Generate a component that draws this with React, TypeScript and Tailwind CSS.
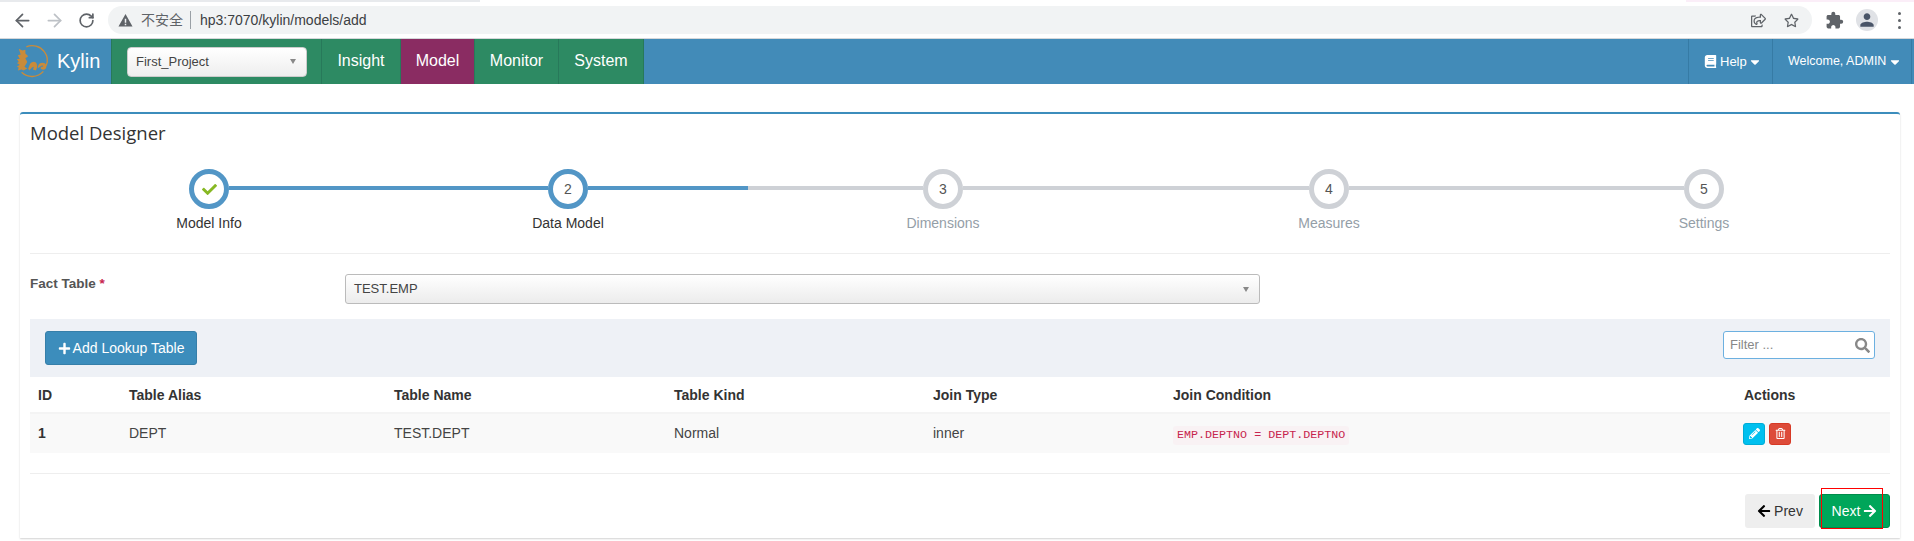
import { FaArrowLeft, FaArrowRight, FaBook, FaCaretDown, FaCheck, FaPencilAlt, FaPlus, FaRegShareSquare, FaRegStar, FaRegTrashAlt, FaSearch } from 'react-icons/fa';
import { MdExtension, MdPerson } from 'react-icons/md';
import { ArrowLeft, ArrowRight, RotateCw } from 'lucide-react';

const menus = [
  { label: 'Insight', width: 'w-[79px]', bg: 'bg-[#2d8a63]' },
  { label: 'Model', width: 'w-[74px]', bg: 'bg-[#8a2c62]' },
  { label: 'Monitor', width: 'w-[84px]', bg: 'bg-[#2d8a63]' },
  { label: 'System', width: 'w-[85px]', bg: 'bg-[#2d8a63]' },
];

const columns = ['ID', 'Table Alias', 'Table Name', 'Table Kind', 'Join Type', 'Join Condition', 'Actions'];

function Logo() {
  return (
    <svg viewBox="0 0 40 36" className="w-[38px] h-[34px]" fill="#c98b3a">
      <path d="M14 3a16 16 0 0 1 19 5 15 15 0 0 1 2 15" fill="none" stroke="#c98b3a" strokeWidth="1.4" />
      <path d="M9 30a16 16 0 0 0 23-1" fill="none" stroke="#c98b3a" strokeWidth="1.4" />
      <path d="M6 5l4 2 3-1 0 4 3 3-3 2 2 4-3 5 3 2-4 2-2-1-4 1 1-3-2-1 3-2-3-2 2-1-2-3 3 0-2-4 3-1z" />
      <path d="M18 21c2-3 6-3 7 0s0 6-1 7l-3-1 1-3-2 1-3 3-1-2z" />
      <path d="M27 22c1-3 7-3 8 0s-1 6-4 5-2-3 0-3 1-2-1-1-3 3-4 2z" />
    </svg>
  );
}

function Step({ n, label, done, active }: { n: number; label: string; done?: boolean; active?: boolean }) {
  return (
    <div className="w-10 flex flex-col items-center shrink-0">
      <div className={`w-10 h-10 rounded-full bg-white border-[5px] flex items-center justify-center text-[14px] text-[#555] ${active ? 'border-[#5296c6]' : 'border-[#ced1d6]'}`}>
        {done ? <FaCheck className="text-[#87b823] text-[15px]" /> : n}
      </div>
      <div className={`mt-[5px] text-[14px] leading-[18px] whitespace-nowrap ${active ? 'text-[#333]' : 'text-[#949ea7]'}`}>{label}</div>
    </div>
  );
}

function Bar({ width, active }: { width: string; active?: boolean }) {
  return <div className={`h-1 mt-[17px] shrink-0 ${width} ${active ? 'bg-[#5296c6]' : 'bg-[#ced1d6]'}`} />;
}

export default function App() {
  return (
    <div className="w-[1914px] h-[541px] overflow-hidden bg-white text-[#333] font-['Liberation_Sans','Noto_Sans_CJK_SC',sans-serif]">
      {/* browser chrome */}
      <div className="h-[2px] flex">
        <div className="w-[480px] bg-[#e8eaed]" />
        <div className="w-[1206px] bg-white" />
        <div className="flex-1 bg-[#fbeef8]" />
      </div>
      <div className="h-[37px] flex items-center border-b border-[#d5d7da]">
        <div className="w-[108px] flex items-center pl-[12px] gap-[11px] text-[#5f6368] shrink-0">
          <ArrowLeft size={21} strokeWidth={2} />
          <ArrowRight size={21} strokeWidth={2} className="text-[#bdc1c6]" />
          <RotateCw size={17} strokeWidth={2.4} className="ml-[2px]" />
        </div>
        <div className="w-[1704px] h-[28px] rounded-full bg-[#f1f3f4] flex items-center pl-[10px] pr-[13px] text-[14px] shrink-0">
          <svg viewBox="0 0 16 16" className="w-[15px] h-[15px] text-[#5f6368]" fill="currentColor">
            <path d="M8 1l7.5 13.5h-15zM7.2 6v4.5h1.6V6zm0 5.5v1.6h1.6v-1.6z" fillRule="evenodd" />
          </svg>
          <span className="ml-[8px] text-[14px] text-[#5f6368]">不安全</span>
          <span className="ml-[7px] mr-[9px] w-px h-[18px] bg-[#9aa0a6]" />
          <span className="text-[#3c4043]">hp3:7070/kylin/models/add</span>
          <div className="ml-auto flex items-center gap-[18px] text-[#5f6368]">
            <FaRegShareSquare className="text-[15px]" />
            <FaRegStar className="text-[15px]" />
          </div>
        </div>
        <MdExtension className="ml-[13px] text-[19px] text-[#5f6368] shrink-0" />
        <div className="ml-[12px] w-[22px] h-[22px] rounded-full bg-[#e0e2e6] flex items-center justify-center shrink-0">
          <MdPerson className="text-[20px] text-[#4a5568]" />
        </div>
        <div className="ml-[20px] flex flex-col gap-[4px] shrink-0">
          <span className="w-[3px] h-[3px] rounded-full bg-[#5f6368]" />
          <span className="w-[3px] h-[3px] rounded-full bg-[#5f6368]" />
          <span className="w-[3px] h-[3px] rounded-full bg-[#5f6368]" />
        </div>
      </div>

      {/* navbar */}
      <div className="h-[45px] bg-[#428bb8] flex text-white">
        <div className="w-[111px] flex items-center pl-[13px] gap-[6px] pb-[2px] shrink-0">
          <Logo />
          <span className="text-[20px]">Kylin</span>
        </div>
        <div className="w-[211px] bg-[#2d8a63] border-x border-[#27795a] flex items-center pl-[15px] shrink-0">
          <div className="w-[180px] h-[30px] rounded-[4px] border border-[#ccc] bg-gradient-to-b from-white to-[#eeeeee] flex items-center justify-between pl-[8px] pr-[9px] text-[13px] text-[#444]">
            First_Project
            <span className="w-0 h-0 border-x-[3px] border-x-transparent border-t-[5px] border-t-[#888] mr-[1px]" />
          </div>
        </div>
        {menus.map((m) => (
          <div key={m.label} className={`${m.width} ${m.bg} border-r border-[#27795a] flex items-center justify-center pb-[2px] text-[16px] shrink-0`}>
            {m.label}
          </div>
        ))}
        <div className="ml-auto flex text-[13px]">
          <div className="w-[84px] border-l border-[#367ba5] flex items-center pl-[15px] gap-[3px]">
            <FaBook className="text-[13px]" /> Help <FaCaretDown className="text-[14px] -ml-[2px]" />
          </div>
          <div className="w-[140px] mr-[2px] border-x border-[#367ba5] flex items-center pl-[15px] gap-[2px] text-[12.5px]">
            Welcome, ADMIN <FaCaretDown className="text-[14px]" />
          </div>
        </div>
      </div>

      {/* model designer panel */}
      <div className="mt-[28px] ml-5 w-[1880px] h-[426px] border-t-2 border-[#3c8dbc] rounded-t-[3px] px-[10px] shadow-[0_1px_2px_rgba(0,0,0,0.18)]">
        <h1 className="pt-[7px] text-[18.5px] leading-[24px] font-['Open_Sans',sans-serif] text-[#333]">Model Designer</h1>

        <div className="h-[85px] mt-[24px] flex pl-[159px] border-b border-[#eeeeee]">
          <Step n={1} label="Model Info" done active />
          <Bar width="w-[319px]" active />
          <Step n={2} label="Data Model" active />
          <Bar width="w-[160px]" active />
          <Bar width="w-[175px]" />
          <Step n={3} label="Dimensions" />
          <Bar width="w-[346px]" />
          <Step n={4} label="Measures" />
          <Bar width="w-[335px]" />
          <Step n={5} label="Settings" />
        </div>

        <div className="h-[65px] flex items-start">
          <label className="w-[315px] pt-[21px] text-[13.5px] font-bold text-[#555] leading-[18px]">
            Fact Table <span className="text-[#c7254e]">*</span>
          </label>
          <div className="mt-[20px] w-[915px] h-[30px] rounded-[3px] border border-[#bbb] bg-gradient-to-b from-white to-[#ececec] flex items-center justify-between pl-[8px] pr-[10px] text-[13px] text-[#444]">
            TEST.EMP
            <span className="w-0 h-0 border-x-[3px] border-x-transparent border-t-[5px] border-t-[#888]" />
          </div>
        </div>

        <div className="h-[58px] bg-[#eef1f6] flex justify-between pl-[15px] pr-[15px] pt-[12px]">
          <button className="w-[152px] h-[34px] rounded-[3px] bg-[#3c8dbc] border border-[#367fa9] text-white text-[14px] flex items-center justify-center gap-[2px]">
            <FaPlus className="text-[13px]" /> Add Lookup Table
          </button>
          <div className="w-[152px] h-[28px] rounded-[3px] border border-[#6cb0e0] bg-white flex items-center justify-between pl-[6px] pr-[4px] text-[13px] text-[#888]">
            Filter ...
            <FaSearch className="text-[15px] text-[#888]" />
          </div>
        </div>

        <table className="w-[1860px] table-fixed text-[14px] border-collapse">
          <colgroup>
            <col className="w-[91px]" />
            <col className="w-[265px]" />
            <col className="w-[280px]" />
            <col className="w-[259px]" />
            <col className="w-[240px]" />
            <col className="w-[571px]" />
            <col className="w-[154px]" />
          </colgroup>
          <thead>
            <tr className="h-[36px]">
              {columns.map((c) => (
                <th key={c} className="pl-2 pt-[2px] text-left font-bold text-[#333]">{c}</th>
              ))}
            </tr>
          </thead>
          <tbody>
            <tr className="h-[40px] bg-[#f9f9f9] border-t-2 border-[#f4f4f4]">
              <td className="pl-2 font-bold">1</td>
              <td className="pl-2 text-[#444]">DEPT</td>
              <td className="pl-2 text-[#444]">TEST.DEPT</td>
              <td className="pl-2 text-[#444]">Normal</td>
              <td className="pl-2 text-[#444]">inner</td>
              <td className="pl-2">
                <code className="inline-block h-[19px] leading-[19px] px-[4px] rounded-[3px] bg-[#f9f2f4] text-[#c7254e] text-[11.7px] font-['Liberation_Mono',monospace]">
                  EMP.DEPTNO = DEPT.DEPTNO
                </code>
              </td>
              <td className="pl-2">
                <div className="flex gap-1 -ml-px">
                  <span className="w-[22px] h-[22px] rounded-[3px] bg-[#00c0ef] border border-[#00acd6] text-white flex items-center justify-center">
                    <FaPencilAlt className="text-[11px]" />
                  </span>
                  <span className="w-[22px] h-[22px] rounded-[3px] bg-[#dd4b39] border border-[#d73925] text-white flex items-center justify-center">
                    <FaRegTrashAlt className="text-[11px]" />
                  </span>
                </div>
              </td>
            </tr>
          </tbody>
        </table>

        <div className="mt-5 border-t border-[#eeeeee] pt-5 flex justify-end gap-[4px]">
          <button className="w-[70px] h-[34px] rounded-[3px] bg-[#eeeeee] text-[14px] text-[#333] flex items-center justify-center gap-[3px]">
            <FaArrowLeft className="text-[14px] text-black" /> Prev
          </button>
          <div className="relative">
            <button className="w-[71px] h-[34px] rounded-[3px] bg-[#00a65a] border border-[#008d4c] text-[14px] text-white flex items-center justify-center gap-[3px]">
              Next <FaArrowRight className="text-[14px]" />
            </button>
            {/* red annotation box on the screenshot */}
            <div className="absolute left-[2px] top-[-6px] w-[62px] h-[41px] border border-[#ff0000]" />
          </div>
        </div>
      </div>
    </div>
  );
}
